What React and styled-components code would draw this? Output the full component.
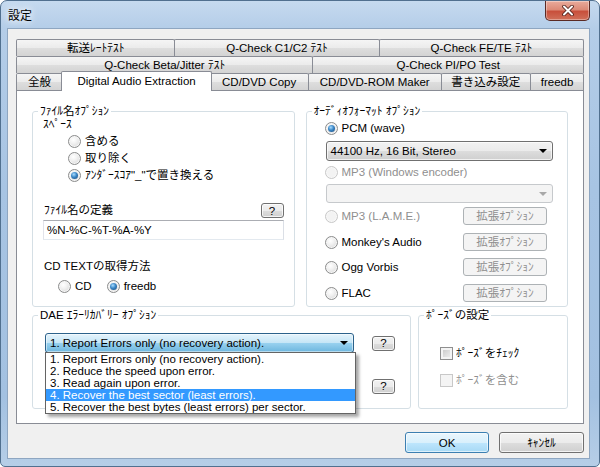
import React from 'react';
import styled, { createGlobalStyle, css } from 'styled-components';

const GlobalStyle = createGlobalStyle`
  html, body { margin: 0; padding: 0; background: #fff; }
  body {
    font-family: "Liberation Sans", "Noto Sans CJK JP", sans-serif;
    font-size: 11.5px;
    color: #000;
  }
  * { box-sizing: border-box; }
`;

const Window = styled.div`
  width: 600px;
  height: 467px;
  display: flex;
  flex-direction: column;
  padding: 0 9px 7px 6px;
  border: 1px solid #51708f;
  border-radius: 7px 7px 5px 5px;
  background: linear-gradient(180deg, #c6daef 0%, #b4cde8 6%, #a7c4e3 40%, #a3c1e1 85%, #b6cee7 100%);
  overflow: hidden;
`;

const TitleBar = styled.div`
  height: 27px;
  flex: none;
  display: flex;
  justify-content: space-between;
  align-items: flex-start;
`;

const Title = styled.span`
  margin: 6px 0 0 1px;
  font-family: "Noto Sans CJK JP", sans-serif;
  font-size: 12px;
  line-height: 15px;
  text-shadow: 0 0 6px #fff, 0 0 10px #fff;
`;

const CloseButton = styled.div`
  width: 45px;
  height: 20px;
  display: flex;
  align-items: center;
  justify-content: center;
  border: 1px solid #5a2a24;
  border-top: none;
  border-radius: 0 0 5px 5px;
  background: linear-gradient(180deg, #e9ab9c 0%, #dc8a77 45%, #c8503c 55%, #d0705a 100%);
  box-shadow: inset 0 0 0 1px rgba(255, 255, 255, 0.35);
`;

const Client = styled.div`
  flex: 1;
  display: flex;
  flex-direction: column;
  padding: 10px 5px 5px 8px;
  background: #f0f0f0;
  border: 1px solid #8ea6c1;
`;

const TabRow = styled.div`
  display: flex;
  height: 17px;
  flex: none;
  align-items: flex-start;
`;

const Tab = styled.div`
  flex: ${p => p.$w} 1 0;
  height: 17px;
  min-width: 0;
  margin-left: -1px;
  display: flex;
  align-items: center;
  justify-content: center;
  white-space: nowrap;
  line-height: 14px;
  border: 1px solid #898c95;
  border-bottom: none;
  border-radius: 2px 2px 0 0;
  background: linear-gradient(180deg, #f5f5f5 0%, #ebebeb 50%, #dedede 51%, #d3d3d3 100%);
  &:first-child { margin-left: 0; }
  ${p => p.$active && css`
    position: relative;
    z-index: 1;
    height: 20px;
    margin: -2px -2px 0 -2px;
    padding-bottom: 2px;
    background: #fff;
    &:first-child { margin-left: -2px; }
  `}
`;

const Page = styled.div`
  flex: 1;
  display: flex;
  flex-direction: column;
  gap: 2px;
  padding: 14px 15px;
  background: #fff;
  border: 1px solid #898c95;
`;

const TopRow = styled.div`
  display: grid;
  grid-template-columns: 1fr 1fr;
  column-gap: 11px;
  height: 202px;
`;

const BottomRow = styled.div`
  display: grid;
  grid-template-columns: 379px 1fr;
  column-gap: 7px;
  height: 100px;
`;

const Group = styled.fieldset`
  margin: 0;
  padding: 0;
  min-width: 0;
  border: 1px solid #d5dfe5;
  border-radius: 3px;
`;

const Legend = styled.legend`
  margin-left: 5px;
  padding: 0 2px;
  line-height: 13px;
`;

const GroupBody = styled.div`
  display: flex;
  flex-direction: column;
  padding: 0 ${p => p.$px ?? 10}px;
`;

const Label = styled.div`
  line-height: 13px;
  margin-top: ${p => p.$mt || 0}px;
  margin-left: ${p => p.$ml || 0}px;
`;

const OptionList = styled.div`
  display: flex;
  flex-direction: ${p => (p.$row ? 'row' : 'column')};
  gap: ${p => p.$gap || 0}px;
  margin-top: ${p => p.$mt || 0}px;
  margin-left: ${p => p.$ml || 0}px;
`;

const Option = styled.label`
  display: flex;
  align-items: center;
  gap: 4px;
  height: 17px;
  line-height: 13px;
  white-space: nowrap;
  color: ${p => (p.$disabled ? '#8f8f8f' : '#000')};
  margin-left: ${p => p.$ml || 0}px;
  margin-top: ${p => p.$mt || 0}px;
`;

const Radio = styled.span`
  position: relative;
  flex: none;
  width: 13px;
  height: 13px;
  border-radius: 50%;
  border: 1px solid ${p => (p.$disabled ? '#c8c8c8' : '#8b8c8c')};
  background: ${p =>
    p.$disabled
      ? '#f3f3f3'
      : 'radial-gradient(circle at 40% 35%, #ffffff 0%, #f2f2f2 35%, #d2d2d2 100%)'};
  box-shadow: inset 0 0 0 1px ${p => (p.$disabled ? '#f8f8f8' : '#f6f6f6')};
  ${p => p.$checked && css`
    &::after {
      content: '';
      position: absolute;
      left: 2px;
      top: 2px;
      width: 7px;
      height: 7px;
      border-radius: 50%;
      background: radial-gradient(circle at 40% 35%, #a8dcff 0%, #3a86c6 45%, #1b4777 100%);
    }
  `}
`;

const Check = styled.span`
  flex: none;
  width: 13px;
  height: 13px;
  border: 1px solid ${p => (p.$disabled ? '#c8c8c8' : '#8f8f8f')};
  background: ${p =>
    p.$disabled ? '#f4f4f4' : 'linear-gradient(135deg, #c4c4c4 0%, #e2e2e2 60%, #f2f2f2 100%)'};
  box-shadow: inset 0 0 0 2px #f4f4f4;
`;

const CheckRow = styled.label`
  display: flex;
  align-items: center;
  gap: 3px;
  height: 13px;
  line-height: 13px;
  margin-top: ${p => p.$mt || 0}px;
  color: ${p => (p.$disabled ? '#8f8f8f' : '#000')};
`;

const Button = styled.button`
  flex: none;
  width: ${p => p.$w}px;
  height: ${p => p.$h}px;
  padding: 0;
  font: inherit;
  line-height: 12px;
  color: #000;
  border: 1px solid #707070;
  border-radius: 3px;
  background: linear-gradient(180deg, #f2f2f2 0%, #ebebeb 50%, #dddddd 51%, #cfcfcf 100%);
  box-shadow: inset 0 0 0 1px rgba(255, 255, 255, 0.75);
  margin-right: ${p => p.$mr || 0}px;
  ${p => p.$disabled && css`
    color: #8f8f8f;
    border-color: #adb2b5;
    background: #f4f4f4;
    box-shadow: none;
  `}
  ${p => p.$default && css`
    border-color: #3c7fb1;
    background: linear-gradient(180deg, #eaf6fd 0%, #d9f0fc 50%, #bee6fd 51%, #a7d9f5 100%);
    box-shadow: inset 0 0 0 1px rgba(255, 255, 255, 0.6);
  `}
`;

const FieldRow = styled.div`
  display: flex;
  align-items: center;
  justify-content: ${p => p.$between ? 'space-between' : 'flex-start'};
  gap: ${p => p.$gap || 0}px;
  height: ${p => p.$h}px;
  margin-top: ${p => p.$mt || 0}px;
`;

const TextInput = styled.div`
  height: 20px;
  margin-top: ${p => p.$mt || 0}px;
  padding-left: 3px;
  display: flex;
  align-items: center;
  background: #fff;
  border: 1px solid #e3e9ef;
  border-top-color: #abadb3;
  border-left-color: #e2e3ea;
  border-right-color: #dbdfe6;
`;

const Combo = styled.div`
  position: relative;
  flex: none;
  width: ${p => p.$w}px;
  height: ${p => p.$h}px;
  margin-left: ${p => p.$ml || 0}px;
  margin-top: ${p => p.$mt || 0}px;
  display: flex;
  align-items: center;
  justify-content: space-between;
  padding: 0 5px 0 4px;
  line-height: 13px;
  border: 1px solid #707070;
  border-radius: 3px;
  background: linear-gradient(180deg, #f2f2f2 0%, #ebebeb 50%, #dddddd 51%, #cfcfcf 100%);
  box-shadow: inset 0 0 0 1px rgba(255, 255, 255, 0.7);
  ${p => p.$disabled && css`
    border-color: #c6c9cc;
    background: #f4f4f4;
    box-shadow: none;
  `}
  ${p => p.$open && css`
    border-color: #2c628b;
    background: linear-gradient(180deg, #e5f4fc 0%, #c4e5f6 50%, #98d1ef 51%, #6db6de 100%);
    box-shadow: inset 0 0 0 1px rgba(255, 255, 255, 0.5);
  `}
`;

const Arrow = styled.span`
  width: 0;
  height: 0;
  border-left: 4px solid transparent;
  border-right: 4px solid transparent;
  border-top: 4px solid ${p => (p.$disabled ? '#a8a8a8' : '#000')};
`;

const Spacer = styled.div`
  flex: none;
  width: ${p => p.$w}px;
  height: ${p => p.$h}px;
`;

const DropList = styled.ul`
  position: absolute;
  z-index: 5;
  top: 100%;
  left: -1px;
  width: 311px;
  margin: 0;
  padding: 0;
  list-style: none;
  background: #fff;
  border: 1px solid #646464;
  box-shadow: 3px 3px 3px rgba(0, 0, 0, 0.35);
`;

const DropItem = styled.li`
  height: 12px;
  line-height: 12px;
  padding-left: 4px;
  white-space: nowrap;
  color: ${p => (p.$selected ? '#fff' : '#000')};
  background: ${p => (p.$selected ? '#3399ff' : 'transparent')};
`;

const Footer = styled.div`
  flex: none;
  display: flex;
  justify-content: flex-end;
  gap: 10px;
  height: 21px;
  margin-top: 8px;
`;

const tabRows = [
  [['転送ﾚｰﾄﾃｽﾄ', 158], ['Q-Check C1/C2 ﾃｽﾄ', 204], ['Q-Check FE/TE ﾃｽﾄ', 204]],
  [['Q-Check Beta/Jitter ﾃｽﾄ', 296], ['Q-Check PI/PO Test', 270]],
  [['全般', 45], ['Digital Audio Extraction', 150, true], ['CD/DVD Copy', 98], ['CD/DVD-ROM Maker', 132], ['書き込み設定', 89], ['freedb', 52]],
];

const recovery = [
  '1. Report Errors only (no recovery action).',
  '2. Reduce the speed upon error.',
  '3. Read again upon error.',
  '4. Recover the best sector (least errors).',
  '5. Recover the best bytes (least errors) per sector.',
];

const encoders = [
  ['MP3 (L.A.M.E.)', true, 4],
  ["Monkey's Audio", false, 8],
  ['Ogg Vorbis', false, 7],
  ['FLAC', false, 8],
];

export default function App() {
  return (
    <>
      <GlobalStyle />
      <Window>
        <TitleBar>
          <Title>設定</Title>
          <CloseButton>
            <svg width="12" height="11" viewBox="0 0 12 11">
              <path d="M2 1.5 L10 9.5 M10 1.5 L2 9.5" stroke="#4a1a14" strokeWidth="3.6" strokeLinecap="round" />
              <path d="M2 1.5 L10 9.5 M10 1.5 L2 9.5" stroke="#fff" strokeWidth="2" strokeLinecap="round" />
            </svg>
          </CloseButton>
        </TitleBar>
        <Client>
          {tabRows.map((row, i) => (
            <TabRow key={i}>
              {row.map(([text, w, active]) => (
                <Tab key={text} $w={w} $active={active}>{text}</Tab>
              ))}
            </TabRow>
          ))}
          <Page>
            <TopRow>
              <Group>
                <Legend>ﾌｧｲﾙ名ｵﾌﾟｼｮﾝ</Legend>
                <GroupBody>
                  <Label>ｽﾍﾟｰｽ</Label>
                  <OptionList $ml={25} $mt={2}>
                    <Option><Radio />含める</Option>
                    <Option><Radio />取り除く</Option>
                    <Option><Radio $checked />ｱﾝﾀﾞｰｽｺｱ"_"で置き換える</Option>
                  </OptionList>
                  <FieldRow $between $h={15} $mt={19}>
                    <Label $ml={1}>ﾌｧｲﾙ名の定義</Label>
                    <Button $w={23} $h={15}>?</Button>
                  </FieldRow>
                  <TextInput $mt={2}>%N-%C-%T-%A-%Y</TextInput>
                  <Label $mt={20} $ml={1}>CD TEXTの取得方法</Label>
                  <OptionList $row $gap={15} $ml={15} $mt={5}>
                    <Option><Radio />CD</Option>
                    <Option><Radio $checked />freedb</Option>
                  </OptionList>
                </GroupBody>
              </Group>
              <Group>
                <Legend>ｵｰﾃﾞｨｵﾌｫｰﾏｯﾄ ｵﾌﾟｼｮﾝ</Legend>
                <GroupBody>
                  <Option $ml={8} $mt={2}><Radio $checked />PCM (wave)</Option>
                  <Combo $w={227} $h={20} $ml={9} $mt={4}>
                    <span>44100 Hz, 16 Bit, Stereo</span>
                    <Arrow />
                  </Combo>
                  <Option $ml={8} $mt={3} $disabled><Radio $disabled />MP3 (Windows encoder)</Option>
                  <Combo $w={227} $h={19} $ml={9} $mt={3} $disabled>
                    <span />
                    <Arrow $disabled />
                  </Combo>
                  {encoders.map(([name, disabled, mt]) => (
                    <FieldRow key={name} $between $h={18} $mt={mt}>
                      <Option $ml={8} $disabled={disabled}><Radio $disabled={disabled} />{name}</Option>
                      <Button $w={84} $h={18} $mr={10} $disabled>拡張ｵﾌﾟｼｮﾝ</Button>
                    </FieldRow>
                  ))}
                </GroupBody>
              </Group>
            </TopRow>
            <BottomRow>
              <Group>
                <Legend>DAE ｴﾗｰﾘｶﾊﾞﾘｰ ｵﾌﾟｼｮﾝ</Legend>
                <GroupBody $px={12}>
                  <FieldRow $gap={18} $h={20} $mt={11}>
                    <Combo $w={309} $h={20} $open>
                      <span>{recovery[0]}</span>
                      <Arrow />
                      <DropList>
                        {recovery.map((r, i) => (
                          <DropItem key={r} $selected={i === 3}>{r}</DropItem>
                        ))}
                      </DropList>
                    </Combo>
                    <Button $w={23} $h={15}>?</Button>
                  </FieldRow>
                  <FieldRow $gap={18} $h={20} $mt={23}>
                    <Spacer $w={309} $h={20} />
                    <Button $w={23} $h={15}>?</Button>
                  </FieldRow>
                </GroupBody>
              </Group>
              <Group>
                <Legend>ﾎﾟｰｽﾞの設定</Legend>
                <GroupBody $px={21}>
                  <CheckRow $mt={25}><Check />ﾎﾟｰｽﾞをﾁｪｯｸ</CheckRow>
                  <CheckRow $mt={14} $disabled><Check $disabled />ﾎﾟｰｽﾞを含む</CheckRow>
                </GroupBody>
              </Group>
            </BottomRow>
          </Page>
          <Footer>
            <Button $w={84} $h={21} $default>OK</Button>
            <Button $w={85} $h={21}>ｷｬﾝｾﾙ</Button>
          </Footer>
        </Client>
      </Window>
    </>
  );
}
